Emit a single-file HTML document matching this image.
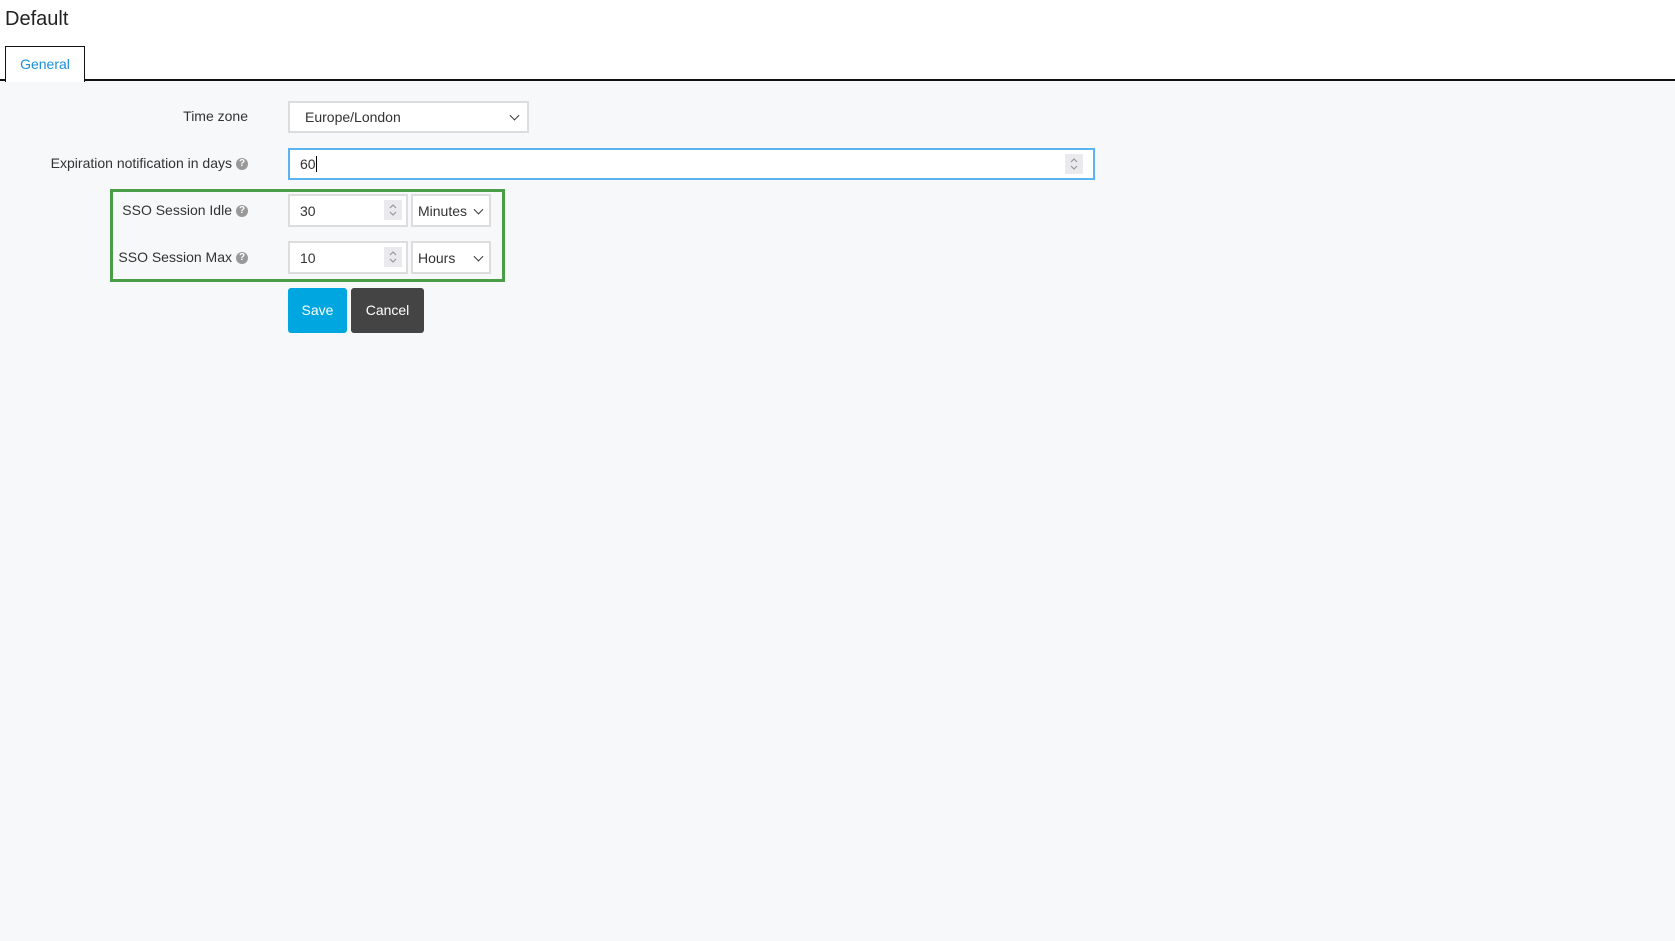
<!DOCTYPE html>
<html><head><style>
body{margin:0;width:1675px;height:941px;background:#f7f8fa;font-family:"Liberation Sans",sans-serif;color:#333;position:relative;overflow:hidden}
.top{position:absolute;left:0;top:0;width:1675px;height:79px;background:#fff;border-bottom:2px solid #111}
.title{position:absolute;left:5px;top:8px;font-size:20px;color:#222}
.tab{position:absolute;left:5px;top:46px;width:78px;height:35px;border:1px solid #111;border-bottom:none;background:#fff;color:#1a8fd6;font-size:14px;text-align:center;line-height:34px}
.lbl{position:absolute;font-size:14px;color:#333;text-align:right;width:300px;left:-52px}
.q{display:inline-block;width:12px;height:12px;border-radius:50%;background:#999;color:#fff;font-size:10px;line-height:12px;text-align:center;font-weight:bold;margin-left:4px;vertical-align:2px}
.box{position:absolute;background:#fff;border:2px solid #ddd;box-sizing:border-box;font-size:14px;padding-left:10px;display:flex;align-items:center}
.chev{position:absolute;right:9px;top:50%;width:6px;height:6px;border-right:1.6px solid #333;border-bottom:1.6px solid #333;transform:translateY(-70%) rotate(45deg)}
.spin{position:absolute;right:4px;top:4px;width:18px;height:20px;background:#eaeaee}
.btn{position:absolute;top:288px;height:45px;border-radius:3px;color:#fff;font-size:14px;text-align:center;line-height:45px}
</style></head><body>
<div class="top"></div>
<div class="title">Default</div>
<div class="tab">General</div>
<div class="lbl" style="top:108px">Time zone</div>
<div class="box" style="left:288px;top:101px;width:241px;height:32px;padding-left:15px">Europe/London<span class="chev"></span></div>
<div class="lbl" style="top:155px">Expiration notification in days<span class="q">?</span></div>
<div class="box" style="left:288px;top:148px;width:807px;height:32px;border-color:#5bb4f0">60<span style="display:inline-block;width:1px;height:16px;background:#000"></span><span class="spin" style="right:10px;top:4px"><svg width="18" height="20"><path d="M6 8l3-3 3 3M6 12l3 3 3-3" fill="none" stroke="#999" stroke-width="1.2"/></svg></span></div>
<div style="position:absolute;left:110px;top:189px;width:395px;height:93px;border:3px solid #4a9e47;box-sizing:border-box"></div>
<div class="lbl" style="top:202px">SSO Session Idle<span class="q">?</span></div>
<div class="box" style="left:288px;top:194px;width:120px;height:33px">30<span class="spin"><svg width="18" height="20"><path d="M6 8l3-3 3 3M6 12l3 3 3-3" fill="none" stroke="#999" stroke-width="1.2"/></svg></span></div>
<div class="box" style="left:411px;top:194px;width:80px;height:33px;padding-left:5px">Minutes<span class="chev" style="right:7px"></span></div>
<div class="lbl" style="top:249px">SSO Session Max<span class="q">?</span></div>
<div class="box" style="left:288px;top:241px;width:120px;height:33px">10<span class="spin"><svg width="18" height="20"><path d="M6 8l3-3 3 3M6 12l3 3 3-3" fill="none" stroke="#999" stroke-width="1.2"/></svg></span></div>
<div class="box" style="left:411px;top:241px;width:80px;height:33px;padding-left:5px">Hours<span class="chev" style="right:7px"></span></div>
<div class="btn" style="left:288px;width:59px;background:#00a6e0">Save</div>
<div class="btn" style="left:351px;width:73px;background:#444">Cancel</div>
</body></html>
